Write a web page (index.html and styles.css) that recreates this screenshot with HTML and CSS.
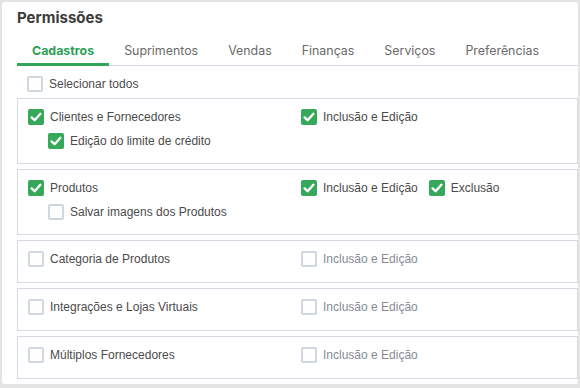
FILE: index.html
```html
<!DOCTYPE html>
<html lang="pt-BR">
<head>
    <meta charset="UTF-8">
    <title>Permissões</title>
    <link rel="stylesheet" href="styles.css">
</head>
<body>
    <div class="card">
        <h2 class="title">Permissões</h2>
        <ul class="tabs">
            <li class="tab active">Cadastros</li>
            <li class="tab">Suprimentos</li>
            <li class="tab">Vendas</li>
            <li class="tab">Finanças</li>
            <li class="tab">Serviços</li>
            <li class="tab">Preferências</li>
        </ul>

        <div class="select-all">
            <label class="check"><span class="box"></span>Selecionar todos</label>
        </div>

        <div class="group">
            <div class="group-main">
                <label class="check checked"><span class="box"><svg viewBox="0 0 16 16"><polyline points="3.6,8.4 6.6,11.2 12.4,4.8"/></svg></span>Clientes e Fornecedores</label>
                <label class="check checked sub"><span class="box"><svg viewBox="0 0 16 16"><polyline points="3.6,8.4 6.6,11.2 12.4,4.8"/></svg></span>Edição do limite de crédito</label>
            </div>
            <div class="group-actions">
                <label class="check checked"><span class="box"><svg viewBox="0 0 16 16"><polyline points="3.6,8.4 6.6,11.2 12.4,4.8"/></svg></span>Inclusão e Edição</label>
            </div>
        </div>

        <div class="group">
            <div class="group-main">
                <label class="check checked"><span class="box"><svg viewBox="0 0 16 16"><polyline points="3.6,8.4 6.6,11.2 12.4,4.8"/></svg></span>Produtos</label>
                <label class="check sub"><span class="box"></span>Salvar imagens dos Produtos</label>
            </div>
            <div class="group-actions">
                <label class="check checked"><span class="box"><svg viewBox="0 0 16 16"><polyline points="3.6,8.4 6.6,11.2 12.4,4.8"/></svg></span>Inclusão e Edição</label>
                <label class="check checked"><span class="box"><svg viewBox="0 0 16 16"><polyline points="3.6,8.4 6.6,11.2 12.4,4.8"/></svg></span>Exclusão</label>
            </div>
        </div>

        <div class="group">
            <div class="group-main">
                <label class="check"><span class="box"></span>Categoria de Produtos</label>
            </div>
            <div class="group-actions">
                <label class="check muted"><span class="box"></span>Inclusão e Edição</label>
            </div>
        </div>

        <div class="group">
            <div class="group-main">
                <label class="check"><span class="box"></span>Integrações e Lojas Virtuais</label>
            </div>
            <div class="group-actions">
                <label class="check muted"><span class="box"></span>Inclusão e Edição</label>
            </div>
        </div>

        <div class="group">
            <div class="group-main">
                <label class="check"><span class="box"></span>Múltiplos Fornecedores</label>
            </div>
            <div class="group-actions">
                <label class="check muted"><span class="box"></span>Inclusão e Edição</label>
            </div>
        </div>
    </div>
</body>
</html>
```

FILE: styles.css
```css
body {
    margin: 0;
    padding: 2px;
    background-color: #e4e4e4;
    font-family: "Liberation Sans", Arial, sans-serif;
}

.card {
    box-sizing: border-box;
    width: 576px;
    height: 382px;
    overflow: hidden;
    padding: 6px 0 0 15px;
    background-color: #fff;
    border-radius: 3px;
}

.title {
    margin: 0;
    font-family: Inter, sans-serif;
    font-size: 15px;
    font-weight: 700;
    line-height: 20px;
    color: #3b3b3b;
}

.tabs {
    display: flex;
    list-style: none;
    margin: 6px 0 0;
    padding: 0;
    border-bottom: 1px solid #d3d9e2;
}

.tab {
    padding: 8px 15px 3px;
    margin-bottom: -1px;
    border-bottom: 3px solid transparent;
    font-family: Inter, sans-serif;
    font-size: 12.4px;
    line-height: 18px;
    color: #6a6a6a;
}

.tab.active {
    border-bottom-color: #30a65a;
    color: #2c9f56;
    font-weight: 700;
}

.select-all {
    margin: 6px 0 2px;
    padding-left: 10px;
}

.group {
    display: flex;
    border: 1px solid #d3d9e2;
    padding: 6px 0 11px 10px;
    margin-bottom: 5px;
}

.group-main {
    width: 273px;
}

.group-actions {
    display: flex;
    gap: 11px;
    align-items: flex-start;
}

.check {
    display: flex;
    align-items: center;
    gap: 6px;
    height: 24px;
    font-size: 12px;
    color: #4b4b4b;
}

.check.sub {
    height: 23px;
    margin-left: 20px;
}

.check.muted {
    color: #858b96;
}

.box {
    box-sizing: border-box;
    width: 16px;
    height: 16px;
    border: 2px solid #d1d7e1;
    border-radius: 2px;
    background-color: #fff;
}

.check.checked .box {
    border: none;
    background-color: #35a85a;
}

.box svg {
    display: block;
    width: 16px;
    height: 16px;
}

.box polyline {
    fill: none;
    stroke: #fff;
    stroke-width: 2.4;
    stroke-linecap: round;
    stroke-linejoin: round;
}
```
